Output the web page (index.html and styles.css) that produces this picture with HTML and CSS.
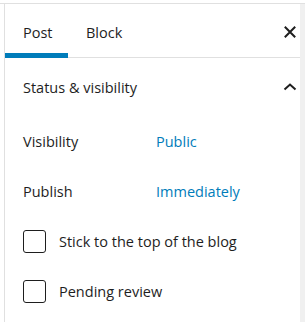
FILE: index.html
```html
<!DOCTYPE html>
<html>
<head>
<meta charset="utf-8">
<link rel="stylesheet" href="styles.css">
</head>
<body>
<div class="frame">
  <div class="gutter"></div>
  <div class="panel">
    <div class="tabs">
      <div class="tab active">Post</div>
      <div class="tab">Block</div>
      <button class="close" aria-label="Close">
        <svg width="20" height="20" viewBox="0 0 20 20"><path d="M4.8 4.8 15.2 15.2M15.2 4.8 4.8 15.2" stroke="#1e1e1e" stroke-width="2" fill="none"/></svg>
      </button>
    </div>
    <div class="section-head">
      <span class="section-title">Status &amp; visibility</span>
      <svg class="chev" width="20" height="20" viewBox="0 0 20 20"><path d="M4.5 12.5 10 7.5l5.5 5" stroke="#1e1e1e" stroke-width="2" fill="none"/></svg>
    </div>
    <div class="row"><span class="label">Visibility</span><span class="value">Public</span></div>
    <div class="row"><span class="label">Publish</span><span class="value">Immediately</span></div>
    <label class="check"><span class="box"></span><span>Stick to the top of the blog</span></label>
    <label class="check"><span class="box"></span><span>Pending review</span></label>
  </div>
  <div class="side"></div>
</div>
</body>
</html>
```
FILE: styles.css
```css
html, body { margin: 0; padding: 0; background: #fff; }
body {
  font-family: "Open Sans", "Noto Sans", sans-serif;
  font-size: 14.5px;
  color: #1e1e1e;
  padding-top: 3px;
}
.frame {
  display: flex;
  border-top: 1px solid #e0e0e0;
  height: 318px;
}
.gutter { width: 4px; }
.panel {
  width: 295px;
  border-left: 1px solid #e0e0e0;
  display: flex;
  flex-direction: column;
}
.side { flex: 1; background: #f0f0f0; }
.tabs {
  display: flex;
  align-items: stretch;
  height: 53px;
  border-bottom: 1px solid #e0e0e0;
}
.tab {
  display: flex;
  align-items: center;
  padding: 3px 18px 0;
  box-sizing: border-box;
}
.tab.active {
  width: 63px;
  box-shadow: inset 0 -4px 0 #007cba, 0 1px 0 #007cba;
}
.close {
  margin-left: auto;
  border: 0;
  background: none;
  padding: 3px 0 0;
  width: 20px;
  display: flex;
  align-items: center;
  justify-content: center;
}
.section-head {
  display: flex;
  align-items: center;
  justify-content: space-between;
  height: 58px;
  padding: 0 0 0 18px;
}
.chev { margin-right: 0; }
.row {
  display: flex;
  align-items: center;
  height: 50px;
  padding-left: 18px;
}
.label { width: 133px; }
.value { color: #007cba; }
.check {
  display: flex;
  align-items: center;
  gap: 13px;
  height: 50px;
  padding-left: 18px;
}
.box {
  width: 23px;
  height: 23px;
  border: 1px solid #1e1e1e;
  border-radius: 3px;
  box-sizing: border-box;
}
```
